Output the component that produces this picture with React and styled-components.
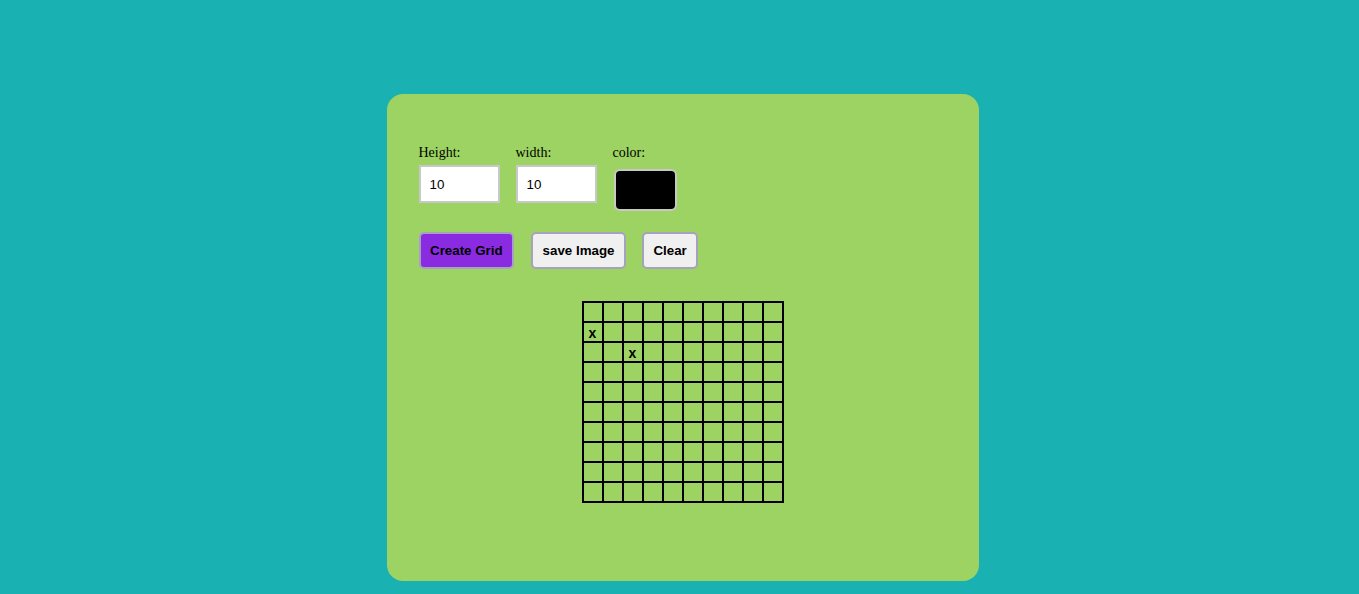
import React from "react";
import styled, { createGlobalStyle } from "styled-components";

const Global = createGlobalStyle`
  html, body { margin: 0; padding: 0; background: #19b1b1; }
  body { font-family: "Liberation Serif", "Times New Roman", serif; }
`;

const Page = styled.div`
  min-height: 594px;
  box-sizing: border-box;
  display: flex;
  justify-content: center;
  align-items: flex-start;
  padding: 94px 0 0 6px;
`;

const Panel = styled.div`
  width: 592px;
  height: 487px;
  box-sizing: border-box;
  background: #9dd362;
  border-radius: 16px;
  padding: 51px 32px 0;
  display: flex;
  flex-direction: column;
`;

const Fields = styled.div`
  display: flex;
  gap: 16px;
  align-items: flex-start;
`;

const Field = styled.div`
  display: flex;
  flex-direction: column;
  align-items: flex-start;
`;

const Label = styled.label`
  font-family: "Liberation Serif", "Times New Roman", serif;
  font-size: 14px;
  line-height: 16px;
  color: #000;
  margin-bottom: 4px;
`;

const NumberInput = styled.input`
  width: 81px;
  height: 38px;
  box-sizing: border-box;
  border: 2px solid #c8c8c8;
  padding: 0 9px;
  font-family: "Liberation Sans", Arial, sans-serif;
  font-size: 13.333px;
  color: #000;
  background: #fff;
  outline: none;
`;

const Swatch = styled.div`
  width: 63px;
  height: 42px;
  box-sizing: border-box;
  margin: 4px 0 0 1px;
  border: 2px solid #c8c8c8;
  border-radius: 6px;
  background: ${(p) => p.$color};
`;

const Buttons = styled.div`
  display: flex;
  gap: 16px;
  margin-top: 21px;
`;

const Button = styled.button`
  height: 37px;
  box-sizing: border-box;
  padding: 0 9.5px;
  margin-right: ${(p) => (p.$extra ? "1px" : "0")};
  border: 2px solid #a6a2bd;
  border-radius: 5px;
  background: ${(p) => (p.$primary ? "#8a2be2" : "#f0f0f0")};
  color: #000;
  font-family: "Liberation Sans", Arial, sans-serif;
  font-weight: bold;
  font-size: 13.333px;
  cursor: pointer;
`;

const GridWrap = styled.div`
  display: flex;
  justify-content: center;
  margin-top: 32px;
`;

const Grid = styled.div`
  display: grid;
  grid-template-columns: repeat(10, 20px);
  grid-auto-rows: 20px;
  border: 1px solid #000;
`;

const Cell = styled.div`
  box-sizing: border-box;
  border: 1px solid #000;
  display: flex;
  align-items: center;
  justify-content: center;
  font-family: "Liberation Sans", Arial, sans-serif;
  font-weight: bold;
  font-size: 14px;
  line-height: 16px;
  padding-top: 1px;
`;

const marks = new Set(["1-0", "2-2"]);

export default function App() {
  const cells = [];
  for (let r = 0; r < 10; r++) {
    for (let c = 0; c < 10; c++) {
      cells.push(<Cell key={`${r}-${c}`}>{marks.has(`${r}-${c}`) ? "x" : ""}</Cell>);
    }
  }
  return (
    <>
      <Global />
      <Page>
        <Panel>
          <Fields>
            <Field>
              <Label>Height:</Label>
              <NumberInput type="number" defaultValue={10} />
            </Field>
            <Field>
              <Label>width:</Label>
              <NumberInput type="number" defaultValue={10} />
            </Field>
            <Field>
              <Label>color:</Label>
              <Swatch $color="#000" />
            </Field>
          </Fields>
          <Buttons>
            <Button $primary $extra>Create Grid</Button>
            <Button>save Image</Button>
            <Button>Clear</Button>
          </Buttons>
          <GridWrap>
            <Grid>{cells}</Grid>
          </GridWrap>
        </Panel>
      </Page>
    </>
  );
}
